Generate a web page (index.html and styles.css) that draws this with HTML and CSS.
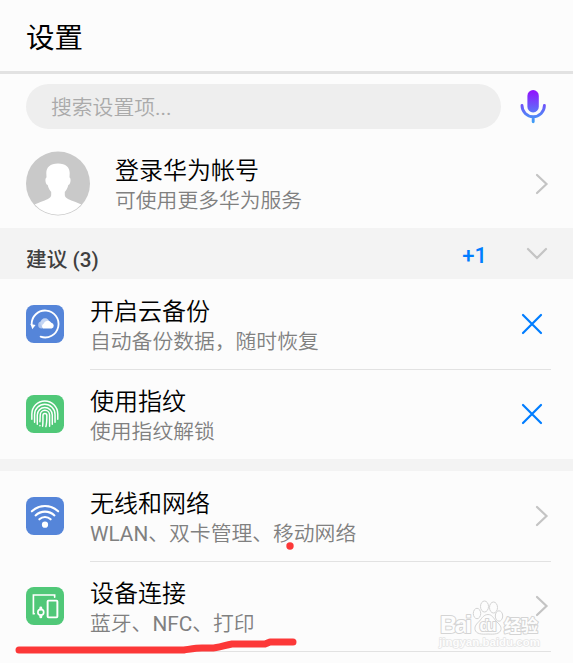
FILE: index.html
```html
<!DOCTYPE html>
<html lang="zh-CN">
<head>
  <meta charset="UTF-8">
  <meta name="viewport" content="width=device-width, initial-scale=1.0">
  <title>设置</title>
  <link rel="stylesheet" href="styles.css">
</head>
<body>

<div class="screen">
  <header class="header">
    <h1>设置</h1>
  </header>

  <div class="search-row">
    <div class="search-box">搜索设置项<span class="latin">...</span></div>
    <svg class="mic" width="28" height="36" viewBox="0 0 28 36">
      <defs>
        <linearGradient id="micColor" gradientUnits="userSpaceOnUse" x1="0" y1="2" x2="0" y2="35">
          <stop offset="0" stop-color="#9013fe"/>
          <stop offset="0.6" stop-color="#5f6ff8"/>
          <stop offset="1" stop-color="#3aa5f5"/>
        </linearGradient>
      </defs>
      <rect x="8.4" y="1" width="11.4" height="22.4" rx="5.7" fill="url(#micColor)"/>
      <path d="M3 16.5a11.2 11.2 0 0 0 22.4 0M14.2 28v4.8" fill="none" stroke="url(#micColor)" stroke-width="2.9" stroke-linecap="round"/>
    </svg>
  </div>

  <div class="account">
    <svg class="avatar" width="64" height="65" viewBox="0 0 64 65">
      <circle cx="32" cy="32.5" r="32" fill="#c9c9c9"/>
      <path d="M32 12.5c-8 0-11.7 4-11.7 9.5l.2 4.5c-1.8.6-1.3 6.5 1.2 7.5.8 3.2 1.8 5.2 3.5 7v3c0 3-4 4.5-8 6-4 1.4-6.5 2.5-8.5 3.500a31.5 31.5 0 0 0 46.600 0c-2-1-4.5-2.100-8.5-3.500-4-1.5-8-3-8-6v-3c1.7-1.8 2.7-3.8 3.5-7 2.5-1 3-6.900 1.200-7.500l.2-4.500c0-5.500-3.700-9.500-11.700-9.500z" fill="#fff"/>
    </svg>
    <div class="text">
      <div class="title">登录华为帐号</div>
      <div class="desc">可使用更多华为服务</div>
    </div>
    <svg class="arrow" width="14" height="22" viewBox="0 0 14 22"><path d="M2 2l9.500 9L2 20"/></svg>
  </div>

  <div class="section-head">
    <span class="section-title">建议 (3)</span>
    <span class="more">+1</span>
    <svg class="arrow" width="22" height="14" viewBox="0 0 22 14"><path d="M2 2l9 9 9-9"/></svg>
  </div>

  <div class="item">
    <svg class="icon" width="38" height="38" viewBox="0 0 39 39">
      <rect width="39" height="39" rx="8" fill="#5585d9"/>
      <path d="M5.8 20A13.8 13.8 0 1 1 15 32.5" fill="none" stroke="#fff" stroke-width="1.9" stroke-linecap="round"/>
      <path d="M4.6 19.5l5.2 1-3.3 4.3z" fill="#fff"/>
      <circle cx="16" cy="20.5" r="3.5" fill="#aec5ee"/>
      <circle cx="19.5" cy="18.5" r="4.8" fill="#c4d5f3"/>
      <path d="M17.5 24.2a3.5 3.5 0 0 1 .5-5 4.5 4.5 0 0 1 8-1 3.1 3.1 0 0 1 .3 6z" fill="#fff"/>
    </svg>
    <div class="content">
      <div class="text">
        <div class="title">开启云备份</div>
        <div class="desc">自动备份数据，随时恢复</div>
      </div>
      <svg class="close" width="22" height="22" viewBox="0 0 22 22"><path d="M2 2l18 18M20 2L2 20"/></svg>
    </div>
  </div>

  <div class="item last">
    <svg class="icon" width="38" height="38" viewBox="0 0 39 39">
      <rect width="39" height="39" rx="8" fill="#50c878"/>
      <g fill="none" stroke="#fff" stroke-width="1.5" stroke-linecap="round">
        <path d="M6 25v-5.5a13.3 13.3 0 0 1 26.6 0V25"/>
        <path d="M8.8 28v-8a10.500 10.500 0 0 1 21 0v8"/>
        <path d="M11.6 30v-9.500a7.700 7.700 0 0 1 15.400 0V30"/>
        <path d="M14.3 27.5l.3-7a4.8 4.8 0 0 1 9.600 0V32"/>
        <path d="M17 32c.5-3 .4-7 .4-11a2 2 0 0 1 4 0c0 4 0 8-1 11.500M14.300 31.200v.3"/>
      </g>
    </svg>
    <div class="content">
      <div class="text">
        <div class="title">使用指纹</div>
        <div class="desc">使用指纹解锁</div>
      </div>
      <svg class="close" width="22" height="22" viewBox="0 0 22 22"><path d="M2 2l18 18M20 2L2 20"/></svg>
    </div>
  </div>

  <div class="gap"></div>

  <div class="item">
    <svg class="icon" width="38" height="38" viewBox="0 0 39 39">
      <rect width="39" height="39" rx="8" fill="#5585d9"/>
      <g fill="none" stroke="#fff" stroke-width="2.1" stroke-linecap="round">
        <path d="M6 14.7a19.5 19.5 0 0 1 27 0"/>
        <path d="M9.8 18.9a14 14 0 0 1 19.4 0"/>
        <path d="M13.7 22.9a8.5 8.5 0 0 1 11.6 0"/>
      </g>
      <circle cx="19.5" cy="28.4" r="3.2" fill="#fff"/>
    </svg>
    <div class="content">
      <div class="text">
        <div class="title">无线和网络</div>
        <div class="desc"><span class="latin">WLAN</span>、双卡管理、移动网络</div>
      </div>
      <svg class="arrow" width="14" height="22" viewBox="0 0 14 22"><path d="M2 2l9.500 9L2 20"/></svg>
    </div>
  </div>

  <div class="item devices">
    <svg class="icon" width="38" height="38" viewBox="0 0 39 39">
      <rect width="39" height="39" rx="8" fill="#50c878"/>
      <g fill="none" stroke="#fff" stroke-width="1.7" stroke-linecap="round">
        <path d="M8.500 27.500H7.600V8.200h21.800v2.300"/>
        <rect x="22.2" y="14" width="10" height="17.2" rx=".8" stroke-width="2"/>
        <circle cx="15.2" cy="26" r="3"/>
        <path d="M15.200 21.500v1M15.200 29.500v1.200" stroke-width="3"/>
      </g>
    </svg>
    <div class="content">
      <div class="text">
        <div class="title">设备连接</div>
        <div class="desc">蓝牙、<span class="latin">NFC</span>、打印</div>
      </div>
      <svg class="arrow" width="14" height="22" viewBox="0 0 14 22"><path d="M2 2l9.500 9L2 20"/></svg>
    </div>
  </div>

  <!-- red pen marks -->
  <svg class="marks" width="573" height="663" viewBox="0 0 573 663">
    <circle cx="290" cy="546" r="3.7"/>
    <path d="M19 650H184c7-1 12-2 18-2h9c7 0 14-3 21-4h33l5-2h23"/>
  </svg>

  <svg class="watermark" width="112" height="54" viewBox="0 0 112 54">
    <g class="paw">
      <ellipse cx="40" cy="13.5" rx="3.700" ry="5.200"/>
      <ellipse cx="47.500" cy="6.500" rx="4" ry="5.500"/>
      <ellipse cx="56.500" cy="7.500" rx="4" ry="5.500"/>
      <ellipse cx="62" cy="16" rx="3.700" ry="5.200"/>
      <path d="M51 14.500c-4 0-6 3.500-8.500 6.500-3 3-5 5-4.500 8.500 1 4.500 6.500 5 13 4.500 6.500.5 12 0 13-4.500.5-3.500-2-5.500-5-8.500-2.500-3-4-6.500-8-6.500z"/>
    </g>
    <text class="wm-main" x="3" y="33" textLength="32">Bai</text>
    <text class="wm-du" x="42.500" y="31" textLength="17">du</text>
    <text class="wm-cn" x="67" y="32" textLength="34">经验</text>
    <text class="wm-url" x="2" y="46" textLength="101">jingyan.baidu.com</text>
  </svg>
</div>

</body>
</html>
```
FILE: styles.css
```css
* {
  box-sizing: border-box;
}

body {
  margin: 0;
  background: #fcfcfc;
  font-family: Roboto, "Noto Sans CJK SC", sans-serif;
}

.screen {
  position: relative;
  height: 663px;
  overflow: hidden;
}

svg {
  display: block;
  flex-shrink: 0;
}

.header {
  height: 74px;
  padding: 19px 26px 0;
  border-bottom: 3px solid #e2e2e2;
}

.header h1 {
  margin: 0;
  font-size: 28.5px;
  line-height: 40px;
  font-weight: 400;
  color: #000;
}

.search-row {
  display: flex;
  align-items: center;
  padding: 10px 26px 0;
}

.search-box {
  width: 475px;
  height: 45px;
  padding-left: 25px;
  border-radius: 23px;
  background: #eee;
  color: #aaa;
  font-size: 20.8px;
  line-height: 48px;
  font-weight: 350;
}

.latin {
  font-weight: 400;
}

.mic {
  margin-left: 18px;
}

.account {
  display: flex;
  align-items: center;
  height: 99px;
  padding: 10px 24px 0 26px;
}

.account .text {
  margin-left: 25px;
  padding-top: 5px;
}

.text {
  flex: 1;
}

.title {
  font-size: 24px;
  line-height: 30px;
  font-weight: 350;
  color: #000;
}

.desc {
  font-size: 20.8px;
  line-height: 30px;
  font-weight: 350;
  color: #808080;
}

.arrow path {
  fill: none;
  stroke: #c4c4c4;
  stroke-width: 2.2;
  stroke-linecap: round;
}

.close path {
  fill: none;
  stroke: #007dff;
  stroke-width: 2.2;
  stroke-linecap: round;
}

.section-head {
  display: flex;
  align-items: center;
  height: 51px;
  padding: 0 25px 0 26px;
  background: #f3f3f3;
}

.section-title {
  flex: 1;
  padding-top: 12px;
  font-size: 20.7px;
  line-height: 30px;
  font-weight: 500;
  color: #404040;
}

.more {
  margin-right: 39px;
  padding-top: 3px;
  font-size: 22px;
  font-weight: 500;
  color: #007dff;
}

.item {
  display: flex;
  height: 91px;
  padding: 0 22px 0 26px;
}

.icon {
  margin-top: 26px;
}

.content {
  display: flex;
  align-items: center;
  flex: 1;
  margin-left: 26px;
  border-bottom: 1px solid #e2e2e2;
}

.content .text {
  padding-top: 6px;
}

.content .arrow {
  margin-right: 2px;
}

.content .close {
  margin-right: 8px;
}

.last {
  height: 89px;
}

.last .icon,
.devices .icon {
  margin-top: 25px;
}

.last .content {
  padding-bottom: 2px;
  border-bottom: none;
}

.devices {
  height: 90px;
}

.devices .content {
  padding-bottom: 1px;
}

.gap {
  height: 12px;
  background: #f3f3f3;
}

.marks {
  position: absolute;
  left: 0;
  top: 0;
}

.marks circle {
  fill: #fc3838;
}

.marks path {
  fill: none;
  stroke: #fc3838;
  stroke-width: 7;
  stroke-linecap: round;
  stroke-linejoin: round;
}

.watermark {
  position: absolute;
  left: 437px;
  top: 600px;
}

.watermark text,
.paw {
  fill: #fdfdfd;
  stroke: #d4d4d4;
  stroke-width: 1;
}

.watermark text {
  stroke-width: 2;
  stroke-linejoin: round;
  paint-order: stroke;
}

.wm-main {
  font: bold 24px "Liberation Sans", sans-serif;
}

.wm-du {
  font: bold 16px "Liberation Sans", sans-serif;
}

.wm-cn {
  font: bold 17px "Noto Sans CJK SC", sans-serif;
}

.watermark .wm-url {
  font: bold 11.5px "Liberation Sans", sans-serif;
  stroke: #e4e4e4;
  stroke-width: 1.4;
}
```
